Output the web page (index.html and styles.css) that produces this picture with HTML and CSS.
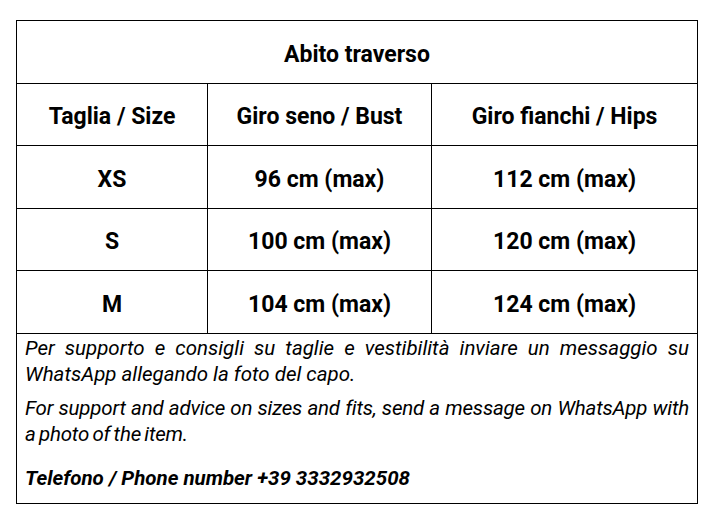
FILE: index.html
```html
<!DOCTYPE html>
<html>
<head>
<meta charset="utf-8">
<link rel="stylesheet" href="styles.css">
</head>
<body>
<table class="sizes">
  <colgroup>
    <col class="c1"><col class="c2"><col class="c3">
  </colgroup>
  <tr class="tall"><td colspan="3" class="title">Abito traverso</td></tr>
  <tr class="short"><td>Taglia / Size</td><td>Giro seno / Bust</td><td>Giro fianchi / Hips</td></tr>
  <tr class="tall"><td>XS</td><td>96 cm (max)</td><td>112 cm (max)</td></tr>
  <tr class="short"><td>S</td><td>100 cm (max)</td><td>120 cm (max)</td></tr>
  <tr class="tall"><td>M</td><td>104 cm (max)</td><td>124 cm (max)</td></tr>
  <tr>
    <td colspan="3" class="note">
      <p class="it">Per supporto e consigli su taglie e vestibilità inviare un messaggio su WhatsApp allegando la foto del capo.</p>
      <p class="en">For support and advice on sizes and fits, send a message on WhatsApp with a&nbsp;photo of the item.</p>
      <p class="phone">Telefono / Phone number +39 3332932508</p>
    </td>
  </tr>
</table>
</body>
</html>
```
FILE: styles.css
```css
html, body {
  margin: 0;
  padding: 0;
  background: #fff;
}
body {
  padding: 20px 0 0 16px;
  font-family: Roboto, "Liberation Sans", sans-serif;
  color: #000;
}
.sizes {
  border-collapse: collapse;
  width: 681px;
  table-layout: fixed;
}
.c1 { width: 191px; }
.c2 { width: 224px; }
.c3 { width: 266px; }
.sizes td {
  border: 1px solid #000;
  padding: 4px 0 0 0;
  text-align: center;
  vertical-align: middle;
  font-weight: 700;
  font-size: 23px;
}
.tall td { height: 58px; }
.short td { height: 57px; }
.sizes td.note {
  height: auto;
  text-align: justify;
  vertical-align: top;
  font-weight: 400;
  font-style: italic;
  font-size: 20.5px;
  line-height: 26px;
  padding: 1px 8px 12px 8px;
}
.note p { margin: 0 0 8px 0; }
.note p.en {
  letter-spacing: -0.2px;
  word-spacing: -1.5px;
}
.note p.phone {
  font-weight: 700;
  margin-top: 18px;
  margin-bottom: 0;
}
```
